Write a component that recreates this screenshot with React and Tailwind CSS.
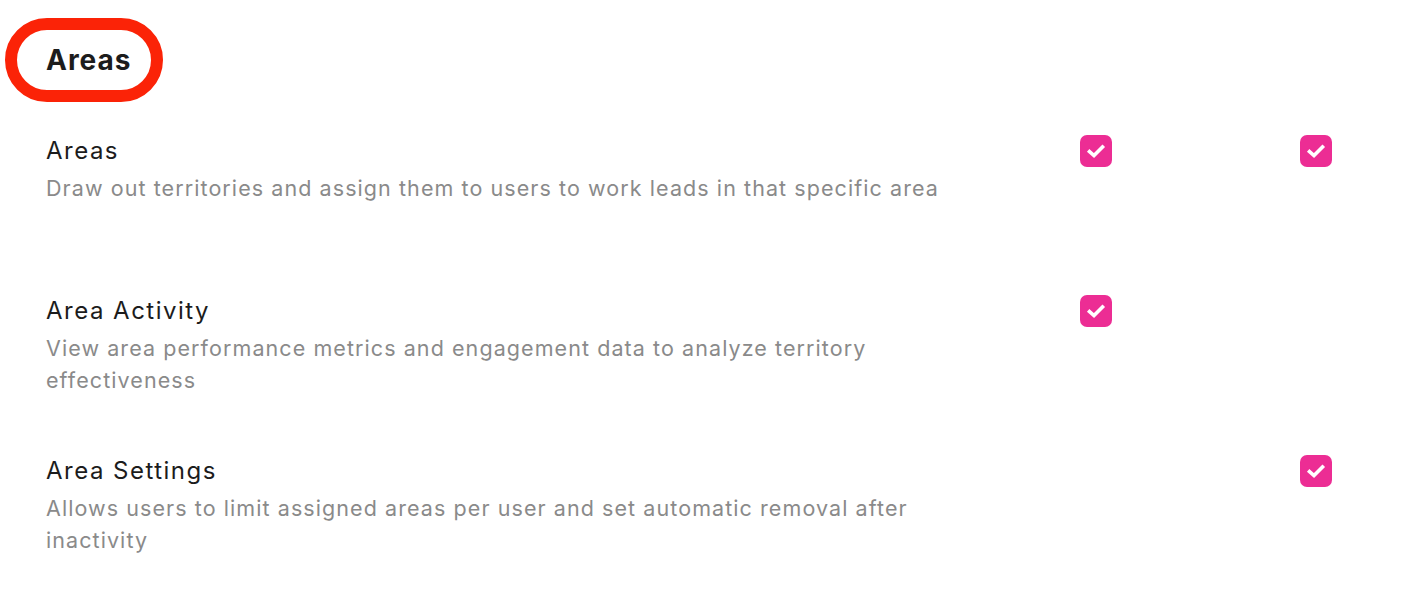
import React from "react";

const rows = [
    {
        title: "Areas",
        desc: "Draw out territories and assign them to users to work leads in that specific area",
        a: true,
        b: true,
    },
    {
        title: "Area Activity",
        desc: "View area performance metrics and engagement data to analyze territory effectiveness",
        a: true,
        b: false,
    },
    {
        title: "Area Settings",
        desc: "Allows users to limit assigned areas per user and set automatic removal after inactivity",
        a: false,
        b: true,
    },
];

function Check({ on }) {
    if (!on) return <div className="w-8 h-8" />;
    return (
        <div className="w-8 h-8 rounded-[7px] bg-[#ec2d94] flex items-center justify-center">
            <svg width="22" height="22" viewBox="0 0 22 22" fill="none">
                <path d="M4.5 11.5l4.5 4 8.5-8.5" stroke="white" strokeWidth="3.6" strokeLinecap="square" />
            </svg>
        </div>
    );
}

export default function App() {
    return (
        <div className="min-h-screen bg-white font-['Inter',sans-serif] pl-[46px] pt-[38px]">
            <div className="relative inline-block">
                {/* highlight ring */}
                <div className="absolute -left-[41px] -top-[20px] w-[158px] h-[84px] rounded-[42px] border-[12px] border-[#fb2307] pointer-events-none"></div>
                <h2 className="text-[28px] leading-[44px] font-bold text-[#1c1c1c] tracking-[0.035em]">Areas</h2>
            </div>

            <div className="mt-[51px] flex flex-col">
                {rows.map((r) => (
                    <div key={r.title} className="flex h-[160px]">
                        <div className="w-[930px]">
                            <div className="text-[24px] leading-[36px] text-[#1c1c1c] tracking-[0.062em]">{r.title}</div>
                            <div className="text-[21.5px] leading-[32px] text-[#8a8a8a] mt-[3px] tracking-[0.05em]">{r.desc}</div>
                        </div>
                        <div className="ml-[104px] w-8 pt-[2px]">
                            <Check on={r.a} />
                        </div>
                        <div className="ml-[188px] w-8 pt-[2px]">
                            <Check on={r.b} />
                        </div>
                    </div>
                ))}
            </div>
        </div>
    );
}
